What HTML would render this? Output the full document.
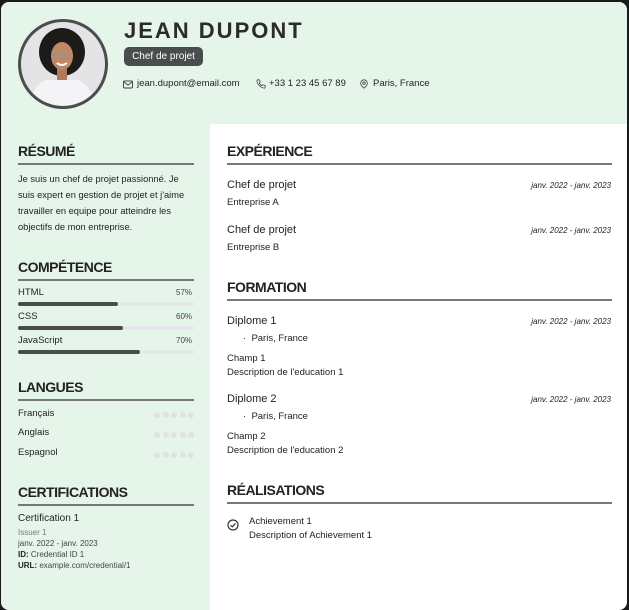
<!DOCTYPE html>
<html><head><meta charset="utf-8"><style>
*{margin:0;padding:0;box-sizing:border-box}
html,body{width:629px;height:610px;overflow:hidden;background:#1a1a1a;font-family:"Liberation Sans",sans-serif;color:#222}
.card{position:absolute;left:1px;top:2px;width:626px;height:608px;background:#fff;border-radius:8px;overflow:hidden}
.hdr{position:absolute;left:0;top:0;width:626px;height:122px;background:#e6f5e9}
.side{position:absolute;left:0;top:122px;width:209px;height:500px;background:#e6f5e9}
.a{position:absolute;white-space:nowrap}
h2{position:absolute;font-size:14px;font-weight:bold;color:#222;line-height:16px;letter-spacing:-0.5px}
.ln{position:absolute;height:2px;background:#777}
.s{font-size:9.5px;line-height:12px;color:#222}
.m{font-size:11px;line-height:14px;color:#222}
.d{font-size:8px;font-style:italic;color:#222;line-height:10px}
.bar{position:absolute;left:17px;width:176px;height:4px;border-radius:2px;background:#e5e7eb}
.bar i{display:block;height:4px;border-radius:2px;background:#4a4d4e}
.dots{position:absolute;left:153px}
.dots b{display:inline-block;width:6px;height:6px;border-radius:3px;background:#e0e3e2;margin-right:2.5px}
</style></head><body>
<div class="card">
<div class="hdr"></div>
<div class="side"></div>
<svg class="a" style="left:16px;top:16px" width="92" height="92" viewBox="0 0 92 92">
<defs><clipPath id="c"><circle cx="46" cy="46" r="43"/></clipPath></defs>
<circle cx="46" cy="46" r="43" fill="#e4e4e6"/>
<g clip-path="url(#c)">
<ellipse cx="45" cy="34" rx="23" ry="24" fill="#1d1b1a"/>
<path d="M12 92 Q14 66 30 62 L60 62 Q76 66 78 92Z" fill="#f4f4f6"/>
<rect x="40" y="48" width="10" height="14" fill="#b07a5a"/>
<ellipse cx="45" cy="38" rx="11" ry="14" fill="#c08765"/>
<rect x="35" y="34" width="9" height="5" rx="2" fill="none" stroke="#999" stroke-width="1"/>
<rect x="46" y="34" width="9" height="5" rx="2" fill="none" stroke="#999" stroke-width="1"/>
<path d="M40 45 Q45 49 50 45" stroke="#fff" stroke-width="2" fill="none"/>
</g>
<circle cx="46" cy="46" r="43.5" fill="none" stroke="#4a4d4e" stroke-width="3"/>
</svg>
<div class="a" style="left:123px;top:16px;font-size:22px;font-weight:bold;letter-spacing:2px;line-height:26px;color:#2b2b2b">JEAN DUPONT</div>
<div class="a" style="left:123px;top:45px;width:79px;height:19px;background:#4a4d4e;border-radius:5px;color:#fff;font-size:10px;line-height:19px;text-align:center">Chef de projet</div>
<svg class="a" style="left:122px;top:78px" width="10" height="9" viewBox="0 0 10 9"><rect x="0.5" y="1" width="9" height="7" rx="1" fill="none" stroke="#444"/><path d="M1 2 L5 5 L9 2" fill="none" stroke="#444"/></svg>
<div class="a s" style="left:136px;top:76px">jean.dupont@email.com</div>
<svg class="a" style="left:255px;top:77px" width="10" height="10" viewBox="0 0 24 24"><path d="M22 16.9v3a2 2 0 0 1-2.2 2 19.8 19.8 0 0 1-8.6-3.1 19.5 19.5 0 0 1-6-6A19.8 19.8 0 0 1 2.1 4.2 2 2 0 0 1 4.1 2h3a2 2 0 0 1 2 1.7c.1 1 .4 1.9.7 2.8a2 2 0 0 1-.5 2.1L8 9.9a16 16 0 0 0 6 6l1.3-1.3a2 2 0 0 1 2.1-.4c.9.3 1.8.6 2.8.7a2 2 0 0 1 1.7 2z" fill="none" stroke="#444" stroke-width="2"/></svg>
<div class="a s" style="left:268px;top:76px">+33 1 23 45 67 89</div>
<svg class="a" style="left:358px;top:77px" width="10" height="10" viewBox="0 0 24 24"><path d="M20 10c0 6-8 12-8 12s-8-6-8-12a8 8 0 0 1 16 0z" fill="none" stroke="#444" stroke-width="2"/><circle cx="12" cy="10" r="3" fill="none" stroke="#444" stroke-width="2"/></svg>
<div class="a s" style="left:372px;top:76px">Paris, France</div>

<!-- sidebar -->
<h2 style="left:17px;top:141px">RÉSUMÉ</h2><div class="ln" style="left:17px;top:161px;width:176px"></div>
<div class="a s" style="left:17px;top:169px;width:176px;white-space:normal;line-height:16px;font-size:9.3px">Je suis un chef de projet passionné. Je suis expert en gestion de projet et j'aime travailler en equipe pour atteindre les objectifs de mon entreprise.</div>
<h2 style="left:17px;top:257px">COMPÉTENCE</h2><div class="ln" style="left:17px;top:277px;width:176px"></div>
<div class="a s" style="left:17px;top:285px">HTML</div><div class="a" style="left:175px;top:286px;font-size:8px;color:#444">57%</div>
<div class="bar" style="top:300px"><i style="width:100px"></i></div>
<div class="a s" style="left:17px;top:309px">CSS</div><div class="a" style="left:175px;top:310px;font-size:8px;color:#444">60%</div>
<div class="bar" style="top:324px"><i style="width:105px"></i></div>
<div class="a s" style="left:17px;top:333px">JavaScript</div><div class="a" style="left:175px;top:334px;font-size:8px;color:#444">70%</div>
<div class="bar" style="top:348px"><i style="width:122px"></i></div>
<h2 style="left:17px;top:377px">LANGUES</h2><div class="ln" style="left:17px;top:397px;width:176px"></div>
<div class="a s" style="left:17px;top:406px">Français</div><div class="a dots" style="top:403px"><b></b><b></b><b></b><b></b><b></b></div>
<div class="a s" style="left:17px;top:425px">Anglais</div><div class="a dots" style="top:423px"><b></b><b></b><b></b><b></b><b></b></div>
<div class="a s" style="left:17px;top:445px">Espagnol</div><div class="a dots" style="top:443px"><b></b><b></b><b></b><b></b><b></b></div>
<h2 style="left:17px;top:482px">CERTIFICATIONS</h2><div class="ln" style="left:17px;top:502px;width:176px"></div>
<div class="a s" style="left:17px;top:511px;font-size:10px">Certification 1</div>
<div class="a" style="left:17px;top:526px;font-size:8px;color:#777">Issuer 1</div>
<div class="a" style="left:17px;top:537px;font-size:8px;color:#444">janv. 2022 - janv. 2023</div>
<div class="a" style="left:17px;top:548px;font-size:8px;color:#444"><b style="color:#222">ID:</b> Credential ID 1</div>
<div class="a" style="left:17px;top:559px;font-size:8px;color:#444"><b style="color:#222">URL:</b> example.com/credential/1</div>

<!-- main -->
<h2 style="left:226px;top:141px">EXPÉRIENCE</h2><div class="ln" style="left:226px;top:161px;width:385px"></div>
<div class="a m" style="left:226px;top:176px">Chef de projet</div><div class="a d" style="right:16px;top:179px">janv. 2022 - janv. 2023</div>
<div class="a s" style="left:226px;top:195px">Entreprise A</div>
<div class="a m" style="left:226px;top:221px">Chef de projet</div><div class="a d" style="right:16px;top:224px">janv. 2022 - janv. 2023</div>
<div class="a s" style="left:226px;top:240px">Entreprise B</div>
<h2 style="left:226px;top:277px">FORMATION</h2><div class="ln" style="left:226px;top:297px;width:385px"></div>
<div class="a m" style="left:226px;top:312px">Diplome 1</div><div class="a d" style="right:16px;top:315px">janv. 2022 - janv. 2023</div>
<div class="a s" style="left:242px;top:331px">·&nbsp; Paris, France</div>
<div class="a s" style="left:226px;top:351px">Champ 1</div>
<div class="a s" style="left:226px;top:365px">Description de l'education 1</div>
<div class="a m" style="left:226px;top:390px">Diplome 2</div><div class="a d" style="right:16px;top:393px">janv. 2022 - janv. 2023</div>
<div class="a s" style="left:242px;top:409px">·&nbsp; Paris, France</div>
<div class="a s" style="left:226px;top:429px">Champ 2</div>
<div class="a s" style="left:226px;top:443px">Description de l'education 2</div>
<h2 style="left:226px;top:480px">RÉALISATIONS</h2><div class="ln" style="left:226px;top:500px;width:385px"></div>
<svg class="a" style="left:226px;top:517px" width="12" height="12" viewBox="0 0 12 12"><circle cx="6" cy="6" r="5" fill="none" stroke="#333" stroke-width="1.2"/><path d="M3.6 6.2 L5.3 7.8 L8.4 4.4" fill="none" stroke="#333" stroke-width="1.2"/></svg>
<div class="a s" style="left:248px;top:514px">Achievement 1</div>
<div class="a s" style="left:248px;top:528px">Description of Achievement 1</div>
</div>
</body></html>
